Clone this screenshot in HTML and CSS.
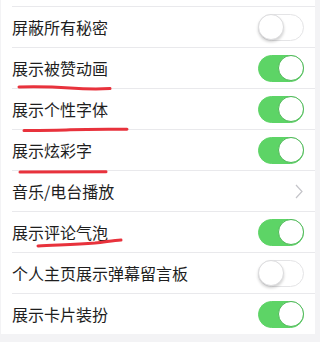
FILE: index.html
```html
<!DOCTYPE html>
<html lang="zh">
<head>
<meta charset="utf-8">
<link rel="stylesheet" href="styles.css">
</head>
<body>
<div class="page">
  <div class="list">
    <div class="top"></div>
    <div class="row"><div class="inner"><span class="label">屏蔽所有秘密</span><span class="switch"></span></div></div>
    <div class="row"><div class="inner"><span class="label">展示被赞动画</span><span class="switch on"></span></div></div>
    <div class="row"><div class="inner"><span class="label">展示个性字体</span><span class="switch on"></span></div></div>
    <div class="row"><div class="inner"><span class="label">展示炫彩字</span><span class="switch on"></span></div></div>
    <div class="row"><div class="inner"><span class="label">音乐/电台播放</span>
      <svg class="chev" width="8" height="15" viewBox="0 0 8 15"><path d="M1 1 L7 7.5 L1 14" fill="none" stroke="#c4c4c9" stroke-width="1.2"/></svg>
    </div></div>
    <div class="row"><div class="inner"><span class="label">展示评论气泡</span><span class="switch on"></span></div></div>
    <div class="row"><div class="inner"><span class="label">个人主页展示弹幕留言板</span><span class="switch"></span></div></div>
    <div class="row"><div class="inner"><span class="label">展示卡片装扮</span><span class="switch on"></span></div></div>
  </div>
  <svg class="marks" width="320" height="342" viewBox="0 0 320 342">
    <path d="M19 87 C40 86.5 55 87 70 88 C85 89 100 89 110 88.6" />
    <path d="M24 130.5 C45 130.5 60 130.3 70 129.8 C90 129 110 129.2 127 129.3" />
    <path d="M20 172 C45 172 75 172 106 171.8" />
    <path d="M38 246 C55 245 75 244.5 95 243 C105 242 113 240.5 121 240" />
  </svg>
</div>
</body>
</html>
```
FILE: styles.css
```css
html, body {
  margin: 0;
  padding: 0;
}
body {
  background: #f3f3f5;
  font-family: "Noto Sans CJK SC", "Noto Sans", sans-serif;
}
.page {
  position: relative;
  width: 320px;
  height: 342px;
  overflow: hidden;
}
.list {
  background: #fff;
  margin-right: 5px;
  margin-left: 1px;
}
.top {
  height: 6px;
}
.row {
  padding-left: 11px;
}
.inner {
  height: 40px;
  border-top: 1px solid #e9e9ec;
  display: flex;
  align-items: center;
  justify-content: space-between;
  padding-right: 11px;
}
.label {
  font-size: 16px;
  color: #1e1e1e;
  line-height: 1;
}
.switch {
  position: relative;
  width: 46px;
  height: 27px;
  box-sizing: border-box;
  border-radius: 14px;
  border: 1.5px solid #e4e4e6;
  background: #fff;
}
.switch::after {
  content: "";
  position: absolute;
  top: -1px;
  left: -1px;
  width: 26px;
  height: 26px;
  box-sizing: border-box;
  border-radius: 50%;
  background: #fff;
  border: 1px solid #dcdcde;
  box-shadow: 0 2px 3px rgba(0,0,0,0.18);
}
.switch.on {
  background: #5dd466;
  border-color: #5dd466;
}
.switch.on::after {
  left: auto;
  right: -1px;
  border: 1px solid #4fb858;
  box-shadow: none;
}
.chev {
  margin-right: 1px;
}
.marks {
  position: absolute;
  left: 0;
  top: 0;
}
.marks path {
  fill: none;
  stroke: #e8323c;
  stroke-width: 3;
  stroke-linecap: round;
}
```
